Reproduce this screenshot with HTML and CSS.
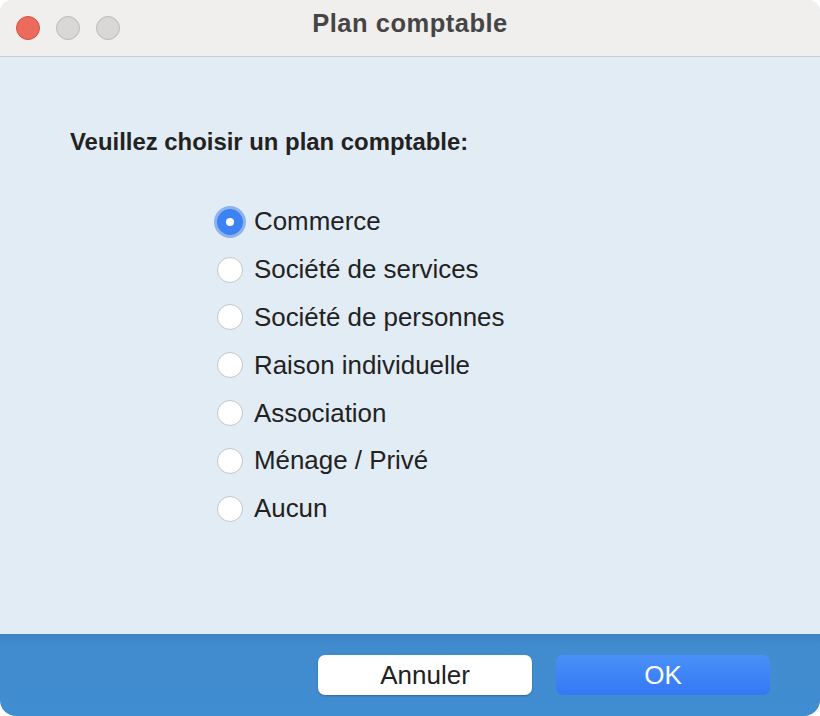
FILE: index.html
```html
<!DOCTYPE html>
<html lang="fr">
<head>
<meta charset="utf-8">
<title>Plan comptable</title>
<link rel="stylesheet" href="styles.css">
</head>
<body>
<div class="window">
  <div class="titlebar">
    <div class="lights">
      <span class="light red"></span>
      <span class="light gray"></span>
      <span class="light gray"></span>
    </div>
    <div class="title">Plan comptable</div>
  </div>
  <div class="content">
    <div class="prompt">Veuillez choisir un plan comptable:</div>
    <div class="options">
      <label class="option"><span class="radio checked"></span><span class="text">Commerce</span></label>
      <label class="option"><span class="radio"></span><span class="text">Société de services</span></label>
      <label class="option"><span class="radio"></span><span class="text">Société de personnes</span></label>
      <label class="option"><span class="radio"></span><span class="text">Raison individuelle</span></label>
      <label class="option"><span class="radio"></span><span class="text">Association</span></label>
      <label class="option"><span class="radio"></span><span class="text">Ménage / Privé</span></label>
      <label class="option"><span class="radio"></span><span class="text">Aucun</span></label>
    </div>
  </div>
  <div class="footer">
    <button class="btn cancel">Annuler</button>
    <button class="btn ok">OK</button>
  </div>
</div>
</body>
</html>
```
FILE: styles.css
```css
html, body {
  margin: 0;
  padding: 0;
  background: #ffffff;
}
body {
  width: 820px;
  height: 716px;
  overflow: hidden;
  font-family: "Liberation Sans", Arial, sans-serif;
}
.window {
  width: 820px;
  height: 716px;
  border-radius: 12px 12px 16px 16px;
  overflow: hidden;
  display: flex;
  flex-direction: column;
  background: #e2ecf5;
}
.titlebar {
  height: 56px;
  flex: none;
  background: #f0efee;
  border-bottom: 1px solid #c9ccd0;
  position: relative;
  display: flex;
  align-items: center;
  justify-content: center;
}
.lights {
  position: absolute;
  left: 16px;
  top: 16px;
  display: flex;
  gap: 16px;
}
.light {
  width: 22px;
  height: 22px;
  border-radius: 50%;
  display: block;
}
.light.red {
  background: #ec6a5e;
  border: 1px solid #d25446;
}
.light.gray {
  background: #d9d8d6;
  border: 1px solid #bdbcba;
}
.title {
  font-weight: bold;
  font-size: 25.5px;
  color: #454545;
  margin-top: -9px;
  letter-spacing: 0.5px;
}
.content {
  flex: 1;
  padding: 71px 0 0 70px;
}
.prompt {
  font-weight: bold;
  font-size: 23.9px;
  color: #222222;
  line-height: 28px;
}
.options {
  margin-top: 42px;
  margin-left: 147px;
  display: flex;
  flex-direction: column;
}
.option {
  height: 47.8px;
  display: flex;
  align-items: center;
  gap: 11px;
}
.radio {
  width: 24px;
  height: 24px;
  border-radius: 50%;
  background: #ffffff;
  border: 1px solid #c3c6ca;
  box-sizing: content-box;
  position: relative;
  flex: none;
}
.radio.checked {
  background: #3c82f5;
  border-color: #3a7ae8;
  box-shadow: 0 0 0 3px #8cb3ee;
}
.radio.checked::after {
  content: "";
  position: absolute;
  left: 8px;
  top: 8px;
  width: 8px;
  height: 8px;
  border-radius: 50%;
  background: #ffffff;
}
.text {
  font-size: 25.9px;
  color: #222222;
}
.footer {
  height: 82px;
  flex: none;
  background: linear-gradient(#3b84c6 0px, #418ccf 12px, #418dd1 100%);
  display: flex;
  justify-content: flex-end;
  align-items: center;
  gap: 24px;
  padding-right: 50px;
  box-sizing: border-box;
}
.btn {
  width: 214px;
  height: 40px;
  border-radius: 7px;
  border: none;
  font-family: "Liberation Sans", Arial, sans-serif;
  font-size: 26px;
  padding: 0;
}
.btn.cancel {
  background: #ffffff;
  color: #222222;
  box-shadow: 0 1px 2px rgba(0,0,0,0.25);
}
.btn.ok {
  background: linear-gradient(#4990f7, #3578f6);
  color: #ffffff;
}
```
